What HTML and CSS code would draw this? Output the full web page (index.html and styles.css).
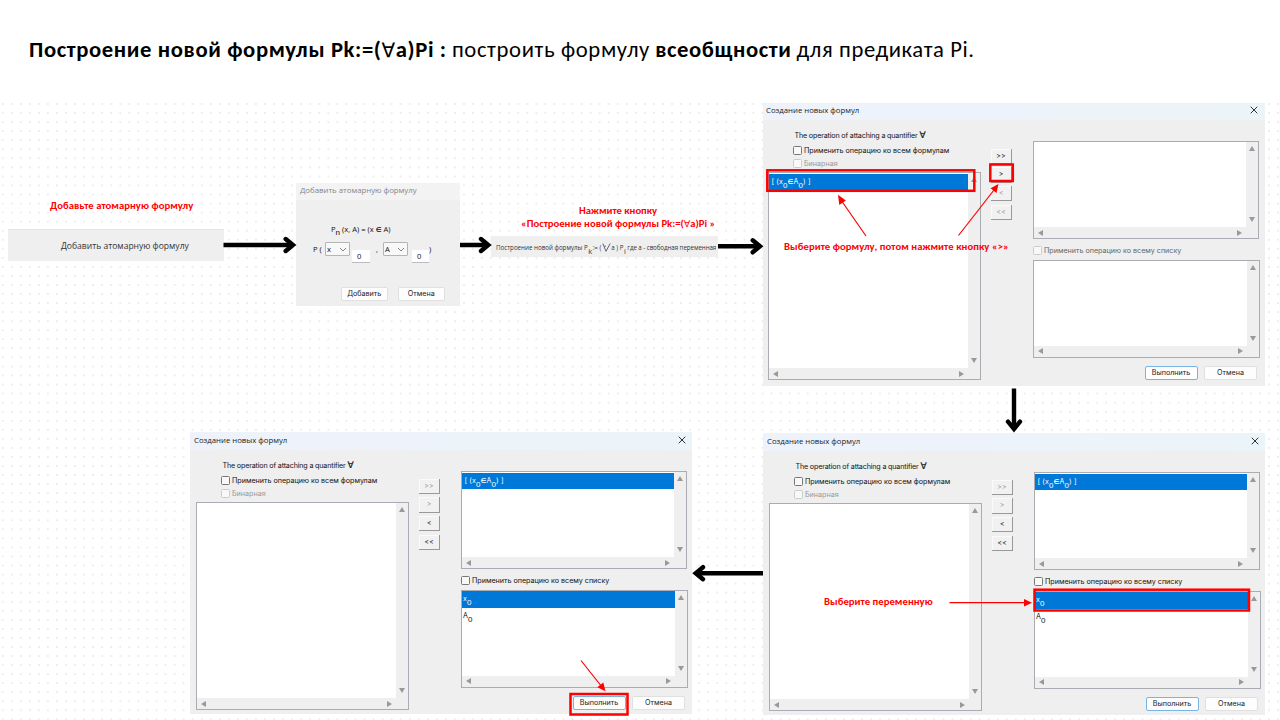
FILE: index.html
```html
<!DOCTYPE html>
<html lang="ru">
<head>
<meta charset="utf-8">
<title>Построение новой формулы</title>
<link rel="stylesheet" href="styles.css">
</head>
<body>
<svg width="0" height="0" class="defs">
  <defs>
    <g id="close"><path d="M.7 .7 7.3 7.3M7.3 .7 .7 7.3" stroke="#333" stroke-width="1" fill="none"/></g>
    <pattern id="dots" x="-1.8" y="-.55" width="9.045" height="9.05" patternUnits="userSpaceOnUse"><circle cx="4.5" cy="4.5" r=".95" fill="#e6e6e6"/></pattern>
  </defs>
</svg>
<main class="slide">
  <h1 class="heading"><b class="h-a">Построение новой формулы Pk:=(<span class="all">∀</span>a)Pi :</b> <span class="h-b">построить формулу</span> <b class="h-c">всеобщности</b> <span class="h-d">для предиката Pi.</span></h1>
  <section class="canvas">
    <svg class="grid" width="1280" height="620"><rect width="1280" height="620" fill="url(#dots)"/></svg>

    <div class="node bar bar-add"><span>Добавить атомарную формулу</span></div>

    <div class="node atomic">
      <header>Добавить атомарную формулу</header>
      <p class="formula">P<sub>n</sub> (x, A) = (x <em>∈</em> A)</p>
      <div class="args">
        <span class="open">P (</span>
        <span class="select">x<svg width="8" height="5" viewBox="0 0 8 5"><path d="M1 1l3 3 3-3" fill="none" stroke="#777" stroke-width=".9"/></svg></span>
        <span class="index">0</span>
        <span class="comma">,</span>
        <span class="select">A<svg width="8" height="5" viewBox="0 0 8 5"><path d="M1 1l3 3 3-3" fill="none" stroke="#777" stroke-width=".9"/></svg></span>
        <span class="index">0</span>
        <span>)</span>
      </div>
      <footer><span class="btn">Добавить</span><span class="btn">Отмена</span></footer>
    </div>

    <div class="node bar bar-all">
      <span class="t1">Построение новой формулы P</span><sub>k</sub><span>:= (</span><svg width="9" height="9" viewBox="0 0 9 9"><path d="M.8 .5 4 8.3 8.2 .5M2.4 3.2H4" fill="none" stroke="#444" stroke-width=".8"/></svg><span>a ) P</span><sub>i</sub><span class="t2">где a - свободная переменная</span>
    </div>

    <div class="node dialog d1">
      <header><span>Создание новых формул</span><svg width="8" height="8"><use href="#close"/></svg></header>
      <div class="body">
        <div class="left">
          <div class="op">The operation of attaching a quantifier <i>∀</i></div>
          <div class="check"><i></i>Применить операцию ко всем формулам</div>
          <div class="check off"><i></i>Бинарная</div>
          <div class="list"><div class="rows"><div class="row sel">[ (x<sub>0</sub><em>∈</em>A<sub>0</sub>) ]</div></div><div class="vs"></div><div class="hs"></div></div>
        </div>
        <div class="moves"><span>&gt;&gt;</span><span>&gt;</span><span class="off">&lt;</span><span class="off">&lt;&lt;</span></div>
        <div class="right">
          <div class="list"><div class="rows"></div><div class="vs"></div><div class="hs"></div></div>
          <div class="check dim"><i></i>Применить операцию ко всему списку</div>
          <div class="list"><div class="rows"></div><div class="vs"></div><div class="hs"></div></div>
          <footer><span class="btn primary">Выполнить</span><span class="btn">Отмена</span></footer>
        </div>
      </div>
    </div>

    <div class="node dialog d2">
      <header><span>Создание новых формул</span><svg width="8" height="8"><use href="#close"/></svg></header>
      <div class="body">
        <div class="left">
          <div class="op">The operation of attaching a quantifier <i>∀</i></div>
          <div class="check"><i></i>Применить операцию ко всем формулам</div>
          <div class="check off"><i></i>Бинарная</div>
          <div class="list"><div class="rows"></div><div class="vs"></div><div class="hs"></div></div>
        </div>
        <div class="moves"><span class="off">&gt;&gt;</span><span class="off">&gt;</span><span>&lt;</span><span>&lt;&lt;</span></div>
        <div class="right">
          <div class="list"><div class="rows"><div class="row sel">[ (x<sub>0</sub><em>∈</em>A<sub>0</sub>) ]</div></div><div class="vs"></div><div class="hs"></div></div>
          <div class="check"><i></i>Применить операцию ко всему списку</div>
          <div class="list vars"><div class="rows"><div class="row sel">x<sub>0</sub></div><div class="row">A<sub>0</sub></div></div><div class="vs"></div><div class="hs"></div></div>
          <footer><span class="btn primary">Выполнить</span><span class="btn">Отмена</span></footer>
        </div>
      </div>
    </div>

    <div class="node dialog d3">
      <header><span>Создание новых формул</span><svg width="8" height="8"><use href="#close"/></svg></header>
      <div class="body">
        <div class="left">
          <div class="op">The operation of attaching a quantifier <i>∀</i></div>
          <div class="check"><i></i>Применить операцию ко всем формулам</div>
          <div class="check off"><i></i>Бинарная</div>
          <div class="list"><div class="rows"></div><div class="vs"></div><div class="hs"></div></div>
        </div>
        <div class="moves"><span class="off">&gt;&gt;</span><span class="off">&gt;</span><span>&lt;</span><span>&lt;&lt;</span></div>
        <div class="right">
          <div class="list"><div class="rows"><div class="row sel">[ (x<sub>0</sub><em>∈</em>A<sub>0</sub>) ]</div></div><div class="vs"></div><div class="hs"></div></div>
          <div class="check"><i></i>Применить операцию ко всему списку</div>
          <div class="list vars"><div class="rows"><div class="row sel">x<sub>0</sub></div><div class="row">A<sub>0</sub></div></div><div class="vs"></div><div class="hs"></div></div>
          <footer><span class="btn primary">Выполнить</span><span class="btn">Отмена</span></footer>
        </div>
      </div>
    </div>

    <svg class="links" width="1280" height="620" viewBox="0 100 1280 620" fill="none">
      <g stroke="#000" stroke-width="4.4" stroke-linejoin="miter">
        <path d="M223.5 245H292M460 245H487M718 246.3H759M1014 388.5V428M763 573.2H698"/>
        <g stroke-linecap="round">
          <path d="M285.7 239 293 245 285.7 251M481 239 488.3 245 481 251M752.7 240.3 760 246.3 752.7 252.3M1008 421.7 1014 429 1020 421.7M703 567.2 695.7 573.2 703 579.2"/>
        </g>
      </g>
      <g stroke="#f00" stroke-width="1.2">
        <path d="M866 236 841 200M958.5 235.5 994 190M949.5 602.7H1026M581 660.5 602 687"/>
        <g fill="#f00" stroke="none">
          <path d="M838 194.7 845.8 200.5 839.3 205ZM998.5 184 996.5 193 990.5 188.2ZM1032 602.7 1024 598.9V606.5ZM605.5 691.3 597.3 687.2 603.3 682.6Z"/>
        </g>
      </g>
      <g stroke="#f00" stroke-width="2.5">
        <rect x="767.3" y="170.3" width="207" height="20.5"/>
        <rect x="990.3" y="164.5" width="22.5" height="16.5"/>
        <rect x="1034.5" y="589.7" width="214.5" height="20.8"/>
        <rect x="570.5" y="694" width="57" height="20.5"/>
      </g>
    </svg>

    <p class="node note n1">Добавьте атомарную формулу</p>
    <p class="node note n2">Нажмите кнопку<br>«Построение новой формулы Pk:=(<span class="all">∀</span>a)Pi »</p>
    <p class="node note n3">Выберите формулу, потом нажмите кнопку «&gt;»</p>
    <p class="node note n4">Выберите переменную</p>
  </section>
</main>
</body>
</html>
```
FILE: styles.css
```css
* { box-sizing: border-box; }
body { margin: 0; background: #fff; color: #111; font: 7.15px/9px Inter, "Open Sans", sans-serif; }
p, h1 { margin: 0; }
i, em { font-style: normal; }
em { font: 700 6.5px/1px "DejaVu Sans", sans-serif; }
sub { line-height: 0; }
.defs { position: absolute; }

.slide { width: 1280px; height: 720px; display: flex; flex-direction: column; overflow: hidden; }
.heading { height: 100px; padding: 35px 0 0 29px; color: #000; white-space: nowrap; font: 400 22.67px/28px Carlito, Lato, sans-serif; }
.h-a { letter-spacing: .62px; }
.h-b { letter-spacing: .64px; }
.h-c { letter-spacing: .6px; }
.h-d { letter-spacing: .6px; }
.all { font: 400 .88em/1px "DejaVu Sans", sans-serif; }

/* Free canvas holding the steps of the scheme */
.canvas { position: relative; flex: 1; }
.grid, .links { position: absolute; left: 0; top: 0; }
.node { position: absolute; white-space: nowrap; }

.bar { display: flex; align-items: center; background: #efefef; color: #333; }
.bar-add { left: 8px; top: 129px; width: 216px; height: 32px; padding-left: 53px; border-top: 1px solid #e4e4e4; font: 8.55px/10px "Open Sans", sans-serif; }
.bar-all { left: 491px; top: 135.5px; width: 227px; height: 21.5px; padding: 2px 0 0 5px; font: 6.2px/9px "Open Sans", sans-serif; gap: .5px; }
.bar-all svg { flex: none; }
.bar-all sub { font-size: 7.5px; padding-top: 8px; }
.bar-all .t2 { letter-spacing: -.07px; margin-left: 1px; }

.atomic { left: 296px; top: 83px; width: 164px; height: 123px; background: #efefef; font: 7.6px/9px "Open Sans", sans-serif; }
.atomic header { height: 17px; padding: 3px 4px; background: #f3f3f3; color: #858585; font-size: 7.8px; }
.atomic .formula { padding: 25px 0 0 35px; }
.atomic .formula sub { font: 8px/0 "Liberation Sans", sans-serif; }
.args { display: flex; align-items: center; padding: 3px 0 0 17px; height: 27px; }
.open { width: 12px; }
.select { width: 25px; height: 14px; border: 1px solid #b5b5b5; border-radius: 1px; background: #f8f8f8; display: flex; align-items: center; justify-content: space-between; padding: 0 2px 0 1px; }
.index { width: 18px; height: 13px; margin: 15px 0 0 2px; padding: 2px 5px; background: #fff; border-bottom: 1px solid #bbb; }
.comma { width: 13px; padding-left: 6px; }
.comma + .select + .index { margin-left: 4px; width: 17px; }
.atomic footer { display: flex; gap: 9.5px; padding: 26px 0 0 44.5px; }

.btn { height: 14px; width: 47.5px; border: 1px solid #e0e0e0; border-radius: 2px; background: #fdfdfd; text-align: center; font: 7.15px/12px Inter, sans-serif; color: #222; }
.primary { border-color: #7ab4e4; }

.dialog { width: 502px; background: #efefef; overflow: hidden; }
.d1 { left: 763px; top: 3px; height: 283px; }
.d1 header { margin-top: -1px; padding: 0 6.5px 2px 3px; }
.d1 .body { margin-left: -1px; }
.d2 { left: 763px; top: 333px; height: 282px; }
.d3 { left: 190px; top: 332px; height: 282px; }
.dialog header { height: 18px; display: flex; justify-content: space-between; align-items: center; padding: 0 6.2px 2px 4px; background: linear-gradient(90deg, #eff2fb, #ebf4f9); color: #222; font: 7.75px/10px "Open Sans", sans-serif; }
.dialog.d1 header { padding: 0 7px 2px 3px; }
.body { width: 502px; display: flex; padding-left: 6px; }
.left { width: 213px; padding-top: 11px; }
.op { height: 14.5px; padding-left: 26.5px; letter-spacing: -.16px; }
.op i { font: 400 9px/9px "DejaVu Sans", sans-serif; -webkit-text-stroke: .2px #111; }
.check { display: flex; align-items: center; gap: 2px; height: 9px; }
.left .check { margin: 0 0 4px 25px; }
.left .check + .check { margin-bottom: 4.8px; }
.check i { width: 9px; height: 9px; border: 1px solid #777; border-radius: 1.5px; background: #f8f8f8; }
.off { color: #999; }
.dim { color: #666; }
.off i, .dim i { border-color: #ccc; }

.list { display: grid; grid-template: 1fr 11px / 1fr 12px; border: 1px solid #a9acb3; background: #efefef; }
.left .list { height: 208px; }
.rows { background: #fff; padding-top: .5px; }
.row { height: 16.5px; padding: 3px 2.5px 0; letter-spacing: .1px; line-height: 9px; }
.row sub { font: 8px/0 "Liberation Sans", sans-serif; vertical-align: -3.5px; }
.row.sel { background: #0078d7; color: #fff; }
.vars .row { padding: 3px 1px 0; }
.vs { display: flex; flex-direction: column; justify-content: space-between; align-items: center; padding: 4px 0 5px; }
.vs::before, .vs::after { content: ""; border: 3px solid transparent; }
.vs::before { border-top: 0; border-bottom: 5px solid #999; }
.vs::after { border-bottom: 0; border-top: 5px solid #999; }
.hs { display: flex; justify-content: space-between; align-items: center; padding: 0 4px; }
.hs::before, .hs::after { content: ""; border: 3px solid transparent; }
.hs::before { border-left: 0; border-right: 5px solid #999; }
.hs::after { border-right: 0; border-left: 5px solid #999; }

.moves { width: 52px; padding: 28.5px 0 0 10px; display: flex; flex-direction: column; gap: 3px; }
.moves span { width: 21px; height: 15.5px; border: solid #999; border-width: 0 1.5px 1.5px 0; background: #f1f1f1; text-align: center; line-height: 14px; box-shadow: inset 1px 1px #fafafa; }
.moves span:last-child { margin-top: .7px; }

.right { width: 226px; padding-top: 21px; }
.right .list { height: 98px; width: 225.5px; }
.right .list ~ .list { width: 226.5px; }
.right .check { margin: 6.5px 0 5px; }
.right footer { display: flex; gap: 6.5px; padding: 8px 0 0 111.5px; }
.right .btn { width: 53px; }

.note { color: #f00; font: 700 10.67px/13px Carlito, Lato, sans-serif; }
.n1 { left: 50px; top: 98.5px; letter-spacing: .04px; }
.n2 { left: 521px; top: 103.5px; text-align: center; }
.n3 { left: 784px; top: 139.5px; letter-spacing: .07px; }
.n4 { left: 824px; top: 494.5px; letter-spacing: .05px; }
```
